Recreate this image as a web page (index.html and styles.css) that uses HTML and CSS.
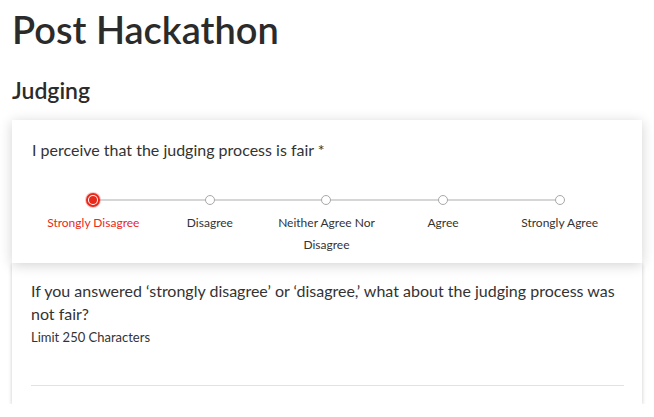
FILE: index.html
```html
<!DOCTYPE html>
<html>
<head>
<meta charset="utf-8">
<link rel="stylesheet" href="styles.css">
</head>
<body>
<main class="page">
  <h1 class="title">Post Hackathon</h1>
  <h2 class="section">Judging</h2>
  <div class="card card-raised">
    <p class="question">I perceive that the judging process is fair *</p>
    <div class="scale">
      <div class="track"></div>
      <div class="option selected"><span class="dot"></span><span class="label">Strongly Disagree</span></div>
      <div class="option"><span class="dot"></span><span class="label">Disagree</span></div>
      <div class="option"><span class="dot"></span><span class="label">Neither Agree Nor Disagree</span></div>
      <div class="option"><span class="dot"></span><span class="label">Agree</span></div>
      <div class="option"><span class="dot"></span><span class="label">Strongly Agree</span></div>
    </div>
  </div>
  <div class="card card-flat">
    <p class="question q2">If you answered ‘strongly disagree’ or ‘disagree,’ what about the judging process was not fair?</p>
    <p class="hint">Limit 250 Characters</p>
    <div class="answer"></div>
  </div>
</main>
</body>
</html>
```
FILE: styles.css
```css
html, body {
  margin: 0;
  padding: 0;
  background: #fff;
}
body {
  font-family: Lato, "Open Sans", sans-serif;
  color: #333;
}
.page {
  padding: 0 12px;
}
.title {
  margin: 0;
  padding-top: 5px;
  font-size: 38px;
  line-height: 48px;
  font-weight: 600;
  color: #2b2b2b;
}
.section {
  margin: 0;
  padding-top: 23px;
  font-size: 23px;
  line-height: 28px;
  font-weight: 600;
  color: #2b2b2b;
}
.card {
  background: #fff;
  width: 630px;
  box-sizing: border-box;
}
.card-raised {
  position: relative;
  z-index: 2;
  margin-top: 16px;
  padding: 18px 20px 7px 20px;
  box-shadow: 0 2px 12px rgba(0,0,0,0.18);
}
.card-flat {
  position: relative;
  z-index: 1;
  padding: 16px 18px 18px 19px;
  box-shadow: 0 1px 4px rgba(0,0,0,0.22);
}
.question {
  margin: 0;
  font-size: 16px;
  line-height: 23px;
  color: #333;
}
.scale {
  position: relative;
  display: grid;
  grid-template-columns: repeat(5, 1fr);
  margin: 31px 4px 0 3px;
}
.track {
  position: absolute;
  top: 7px;
  left: 10%;
  right: 10%;
  height: 2px;
  background: #d6d6d6;
}
.option {
  display: flex;
  flex-direction: column;
  align-items: center;
  position: relative;
}
.dot {
  box-sizing: border-box;
  width: 10px;
  height: 10px;
  margin-top: 3px;
  margin-bottom: 3px;
  border-radius: 50%;
  border: 1px solid #a8a8a8;
  background: #fff;
  position: relative;
}
.selected .dot {
  width: 14px;
  height: 14px;
  margin-top: 1px;
  margin-bottom: 1px;
  border: 2px solid #e8291c;
  box-shadow: 0 0 0 1px rgba(232,41,28,0.25);
}
.selected .dot::after {
  content: "";
  position: absolute;
  left: 1px;
  top: 1px;
  width: 8px;
  height: 8px;
  border-radius: 50%;
  background: #e8291c;
}
.label {
  margin-top: 4px;
  font-size: 12px;
  line-height: 22px;
  color: #333;
  text-align: center;
  max-width: 104px;
}
.selected .label {
  color: #e8291c;
}
.q2 {
  font-size: 16px;
}
.hint {
  margin: 3px 0 0 0;
  font-size: 13px;
  line-height: 18px;
  color: #333;
}
.answer {
  margin-top: 39px;
  border-bottom: 1px solid #e2e2e2;
}
```
